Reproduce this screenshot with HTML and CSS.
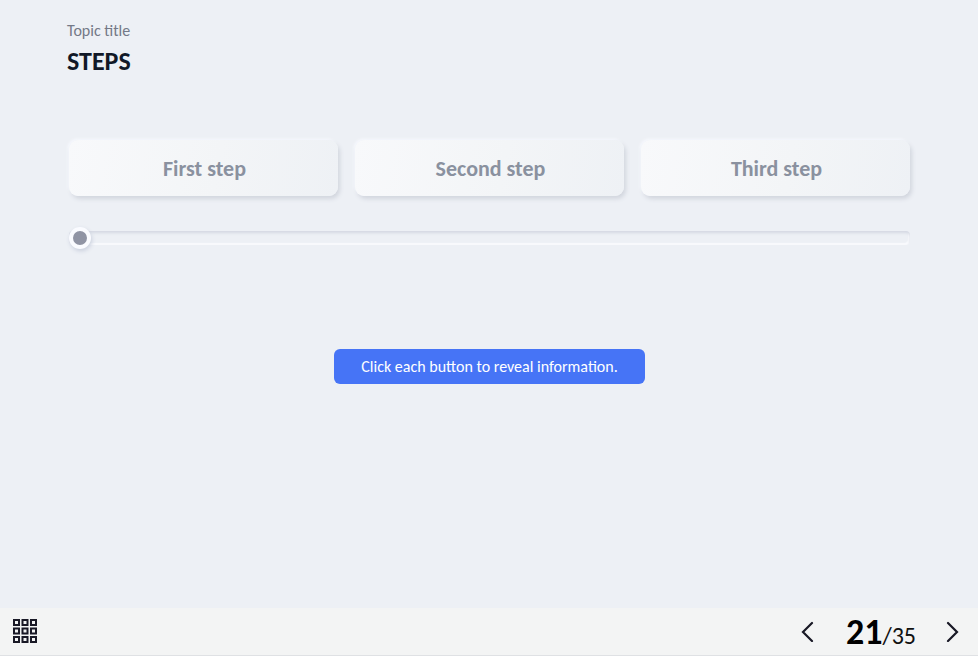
FILE: index.html
```html
<!DOCTYPE html>
<html lang="en">
<head>
<meta charset="utf-8">
<meta name="viewport" content="width=device-width, initial-scale=1">
<title>Steps</title>
<link rel="stylesheet" href="styles.css">
</head>
<body>
<div class="slide">
  <header class="heading">
    <p class="topic">Topic title</p>
    <h1 class="title">STEPS</h1>
  </header>
  <main class="content">
    <div class="steps">
      <button class="step" type="button">First step</button>
      <button class="step" type="button">Second step</button>
      <button class="step" type="button">Third step</button>
    </div>
    <input class="slider" type="range" min="0" max="3" value="0" aria-label="Step">
    <p class="hint">Click each button to reveal information.</p>
  </main>
  <footer class="footer">
    <button class="icon-button" type="button" aria-label="Menu">
      <svg width="24" height="24" viewBox="0 0 24 24" fill="none" stroke="#191926" stroke-width="2">
        <path d="M1 1h5v5h-5zM9.500 1h5v5h-5zM18 1h5v5h-5zM1 9.500h5v5h-5zM9.500 9.500h5v5h-5zM18 9.500h5v5h-5zM1 18h5v5h-5zM9.500 18h5v5h-5zM18 18h5v5h-5z"/>
      </svg>
    </button>
    <nav class="pager">
      <button class="icon-button" type="button" aria-label="Previous">
        <svg width="16" height="22" viewBox="0 0 16 22" fill="none" stroke="#191926" stroke-width="2.2" stroke-linecap="round"><path d="M12 3L3 12L12 21"/></svg>
      </button>
      <p class="pages"><strong class="current">21</strong>/35</p>
      <button class="icon-button" type="button" aria-label="Next">
        <svg width="14" height="22" viewBox="0 0 14 22" fill="none" stroke="#191926" stroke-width="2.2" stroke-linecap="round"><path d="M2 3L11 12L2 21"/></svg>
      </button>
    </nav>
  </footer>
</div>
</body>
</html>
```
FILE: styles.css
```css
* {
  box-sizing: border-box;
}

body {
  margin: 0;
  background: #edf0f5;
  color: #111827;
  font-family: Carlito, Calibri, Lato, "Open Sans", sans-serif;
}

p,
h1 {
  margin: 0;
}

button {
  font-family: inherit;
  cursor: pointer;
}

.slide {
  display: flex;
  flex-direction: column;
  min-height: 100vh;
}

.heading {
  padding: 22px 67px 0;
}

.topic {
  color: #747987;
  font-size: 16px;
  line-height: 18px;
}

.title {
  margin-top: 7px;
  font-size: 26px;
  line-height: 28px;
}

.content {
  display: flex;
  flex: 1;
  flex-direction: column;
  padding: 65px 68px 0 69px;
}

.steps {
  display: grid;
  grid-template-columns: repeat(3, 1fr);
  gap: 17px;
}

.step {
  height: 56px;
  padding: 0 0 0 2px;
  border: 0;
  border-radius: 9px;
  background: linear-gradient(100deg, #f8f9fb, #f3f5f7 55%, #eef1f5);
  box-shadow: 2px 3px 4px #d2d6de, -1px -1px 3px #f8faff;
  color: #8a919f;
  font-size: 22px;
  font-weight: 700;
}

.slider {
  width: 100%;
  height: 24px;
  margin: 30px 0 0;
  appearance: none;
  background: transparent;
}

.slider::-webkit-slider-runnable-track {
  height: 14px;
  border-radius: 4px;
  background: #edf0f5;
  box-shadow: inset 0 2px 3px #d4d8e2, inset -2px -2px 1px #f9fafd;
}

.slider::-webkit-slider-thumb {
  width: 22px;
  height: 22px;
  margin-top: -4px;
  border: 4px solid #fafbff;
  border-radius: 50%;
  appearance: none;
  background: #9094a4;
  box-shadow: 1px 2px 4px #c9cfdd;
}

.hint {
  align-self: center;
  margin-top: 99px;
  padding: 8px 27px 7px;
  border-radius: 6px;
  background: #4674f6;
  color: #fff;
  font-size: 16px;
  line-height: 20px;
}

.footer {
  display: flex;
  align-items: center;
  justify-content: space-between;
  height: 48px;
  padding: 0 18px 2px 13px;
  border-bottom: 1px solid #dfe1e4;
  background: #f3f4f4;
}

.icon-button {
  display: flex;
  padding: 0;
  border: 0;
  background: none;
}

.pager {
  display: flex;
  align-items: center;
  gap: 30px;
}

.pages {
  padding-top: 6px;
  color: #111;
  font-size: 24px;
  line-height: 40px;
}

.current {
  color: #000;
  font-size: 36px;
}
```
